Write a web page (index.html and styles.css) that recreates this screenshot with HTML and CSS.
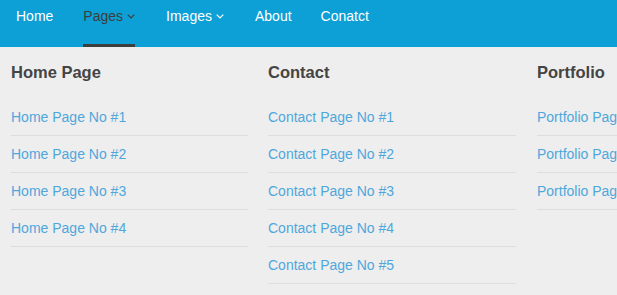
FILE: index.html
```html
<!DOCTYPE html>
<html>
<head>
<meta charset="utf-8">
<link rel="stylesheet" href="styles.css">
</head>
<body>
<nav class="nav">
  <a class="nav-item" href="#">Home</a>
  <a class="nav-item active" href="#">Pages <svg class="caret" viewBox="0 0 8 5" width="8" height="5"><path d="M0.7 0.7 L4 4 L7.3 0.7" fill="none" stroke="currentColor" stroke-width="1.2"/></svg></a>
  <a class="nav-item" href="#">Images <svg class="caret" viewBox="0 0 8 5" width="8" height="5"><path d="M0.7 0.7 L4 4 L7.3 0.7" fill="none" stroke="currentColor" stroke-width="1.2"/></svg></a>
  <a class="nav-item" href="#">About</a>
  <a class="nav-item" href="#">Conatct</a>
</nav>
<div class="mega">
  <div class="col col-1">
    <h3 class="col-title">Home Page</h3>
    <ul class="links">
      <li><a href="#">Home Page No #1</a></li>
      <li><a href="#">Home Page No #2</a></li>
      <li><a href="#">Home Page No #3</a></li>
      <li><a href="#">Home Page No #4</a></li>
    </ul>
  </div>
  <div class="col col-2">
    <h3 class="col-title">Contact</h3>
    <ul class="links">
      <li><a href="#">Contact Page No #1</a></li>
      <li><a href="#">Contact Page No #2</a></li>
      <li><a href="#">Contact Page No #3</a></li>
      <li><a href="#">Contact Page No #4</a></li>
      <li><a href="#">Contact Page No #5</a></li>
    </ul>
  </div>
  <div class="col col-3">
    <h3 class="col-title">Portfolio</h3>
    <ul class="links">
      <li><a href="#">Portfolio Page No #1</a></li>
      <li><a href="#">Portfolio Page No #2</a></li>
      <li><a href="#">Portfolio Page No #3</a></li>
    </ul>
  </div>
</div>
</body>
</html>
```
FILE: styles.css
```css
html, body {
  margin: 0;
  padding: 0;
  background: #eeeeee;
  font-family: "Liberation Sans", Arial, sans-serif;
  overflow: hidden;
}
.nav {
  display: flex;
  height: 47px;
  background: #0ca0d6;
  padding-left: 16px;
}
.nav-item {
  display: flex;
  flex-shrink: 0;
  align-items: flex-start;
  gap: 4px;
  padding-top: 7px;
  height: 40px;
  font-size: 14px;
  line-height: 18px;
  color: #ffffff;
  text-decoration: none;
  margin-right: 30px;
}
.nav-item:nth-child(2) { margin-right: 31px; }
.nav-item:nth-child(3) { margin-right: 31px; }
.nav-item:nth-child(4) { margin-right: 29px; }
.nav-item.active {
  color: #3d3d3d;
  box-shadow: inset 0 -3px 0 #3d3d3d;
}
.caret {
  margin-top: 7px;
}
.mega {
  display: flex;
  padding: 14px 0 0 11px;
  white-space: nowrap;
}
.col { flex-shrink: 0; }
.col-1 { width: 237px; margin-right: 20px; }
.col-2 { width: 248px; margin-right: 21px; }
.col-3 { width: 237px; }
.col-title {
  margin: 0;
  font-size: 16.5px;
  line-height: 22px;
  font-weight: bold;
  color: #444444;
}
.links {
  list-style: none;
  margin: 16px 0 0 0;
  padding: 0;
}
.links li {
  border-bottom: 1px solid #dddddd;
  height: 36px;
}
.links li a {
  display: block;
  padding-top: 9px;
  font-size: 14px;
  line-height: 18px;
  color: #4ea7dc;
  text-decoration: none;
}
```
